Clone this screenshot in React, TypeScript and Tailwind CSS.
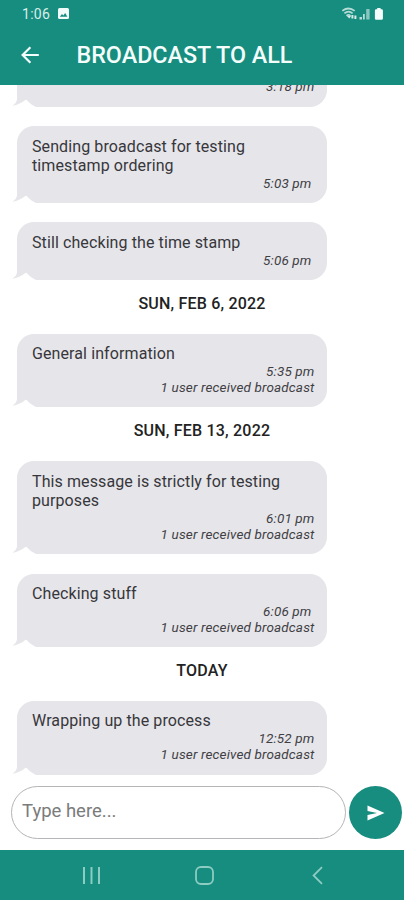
import clsx from "clsx";

type Message = {
  text?: string;
  time: string;
  received?: string;
  inset?: boolean;
};

type Group = {
  date?: string;
  messages: Message[];
};

const received = "1 user received broadcast";

const groups: Group[] = [
  {
    messages: [
      { time: "3:18 pm" },
      {
        text: "Sending broadcast for testing timestamp ordering",
        time: "5:03 pm",
        inset: true,
      },
      { text: "Still checking the time stamp", time: "5:06 pm", inset: true },
    ],
  },
  {
    date: "SUN, FEB 6, 2022",
    messages: [{ text: "General information", time: "5:35 pm", received }],
  },
  {
    date: "SUN, FEB 13, 2022",
    messages: [
      {
        text: "This message is strictly for testing purposes",
        time: "6:01 pm",
        received,
      },
      { text: "Checking stuff", time: "6:06 pm", received, inset: true },
    ],
  },
  {
    date: "TODAY",
    messages: [
      { text: "Wrapping up the process", time: "12:52 pm", received },
    ],
  },
];

function StatusBar() {
  return (
    <div className="flex h-[27px] items-center pl-[22px] pr-[20px] text-[#d8efeb]">
      <span className="text-[14px] leading-none tracking-[0.3px]">1:06</span>
      <svg className="ml-[8px]" width="11" height="11" viewBox="0 0 11 11">
        <rect width="11" height="11" rx="1.5" fill="#f1fbf9" />
        <path d="M1.8 8.7 L4 5.9 L5.3 7.4 L7.2 5 L9.4 8.7 Z" fill="#178d7f" />
      </svg>
      <svg className="ml-auto" width="42" height="14" viewBox="0 0 42 14">
        <g fill="none" stroke="#b5dcd6" strokeWidth="1.8">
          <path d="M0.3 3.9 Q6.5 -1 12.7 3.9" />
          <path d="M2.4 6.4 Q6.5 2.8 10.6 6.4" />
          <path d="M4.5 8.8 Q6.5 7 8.5 8.8" />
        </g>
        <path d="M5 9 L7.3 11.5 L9 9 Z" fill="#d5ece8" />
        <path d="M10.4 8 v3.5 M13.4 8.5 v3.5" stroke="#d5ece8" strokeWidth="2" />
        <path d="M17.5 10 h2.5 v2.5 h-2.5 z M21 7 h1.8 v5.5 h-1.8 z" fill="#b5dcd6" />
        <path d="M24.2 2 h3.4 v10.5 h-3.4 z" fill="#8ac6bd" />
        <path
          d="M35.2 1 h3.4 v1.2 h1 q1.3 0 1.3 1.3 v8 q0 1.3 -1.3 1.3 h-5.4 q-1.3 0 -1.3 -1.3 v-8 q0 -1.3 1.3 -1.3 h1 z"
          fill="#f4fdfb"
        />
      </svg>
    </div>
  );
}

function Header() {
  return (
    <header className="z-10 h-[85px] shrink-0 bg-[#178d7f]">
      <StatusBar />
      <div className="flex h-[56px] items-center pl-[21px]">
        <button aria-label="Back" className="h-[18px] w-[18px]">
          <svg width="18" height="18" viewBox="0 0 18 18" fill="none">
            <path
              d="M17.8 9 H2 M9.4 1.2 L1.6 9 L9.4 16.8"
              stroke="#f4fdfb"
              strokeWidth="2.2"
            />
          </svg>
        </button>
        <h1 className="ml-[37.5px] pt-[2px] text-[23.3px] font-medium leading-none text-[#f4fdfb]">
          BROADCAST TO ALL
        </h1>
      </div>
    </header>
  );
}

function Bubble({ text, time, received, inset }: Message) {
  return (
    <div className="relative w-[310px] rounded-[17px] bg-[#e6e5ea] pb-[12.2px] pl-[15px] pr-[12.5px] pt-[10.3px]">
      {text && (
        <p className="w-[270px] text-[16px] leading-[19px] tracking-[0.1px] text-[#37373b]">
          {text}
        </p>
      )}
      <div className="text-right text-[13.5px] italic leading-[16px] tracking-[0.15px] text-[#3f3f44]">
        <p className={clsx(inset && "pr-[3px]")}>{time}</p>
        {received && <p>{received}</p>}
      </div>
      {/* cola del globo */}
      <svg
        className="absolute -left-[5px] bottom-0"
        width="24"
        height="20"
        viewBox="0 0 24 20"
      >
        <path d="M0 20 L5 14 L14 12.5 Q18 17.2 24 20 Z" fill="#fff" />
        <path
          d="M5 2 V13 Q4 17 0.5 18.8 Q8 17.5 14 12.5 L20 2 Z"
          fill="#e6e5ea"
        />
      </svg>
    </div>
  );
}

function MessageList() {
  return (
    <main className="flex min-h-0 flex-1 flex-col justify-end overflow-hidden pb-[11.5px] pl-[17px]">
      {groups.map((group, i) => (
        <section key={i} className="shrink-0">
          {group.date && (
            <h2 className="-ml-[17px] pb-[21px] pt-[14px] text-center text-[16px] font-medium leading-[19px] tracking-[0.2px] text-[#222]">
              {group.date}
            </h2>
          )}
          <div className="flex flex-col gap-[19.7px]">
            {group.messages.map((m) => (
              <Bubble key={m.time} {...m} />
            ))}
          </div>
        </section>
      ))}
    </main>
  );
}

function Composer() {
  return (
    <div className="flex h-[64px] shrink-0 items-start gap-[3px] pl-[11px]">
      <input
        placeholder="Type here..."
        className="h-[53px] w-[335px] rounded-full border border-[#b5b4b8] bg-white px-[10px] pb-[3px] text-[18.5px] outline-none placeholder:text-[#7b7b7b]"
      />
      <button
        aria-label="Send"
        className="flex h-[53px] w-[53px] items-center justify-center rounded-full bg-[#178d7f]"
      >
        <svg width="18" height="16" viewBox="0 0 18 16">
          <path d="M0.5 0.5 L17.5 8 L0.5 15.5 V9.9 L10 8 L0.5 6.1 Z" fill="#fff" />
        </svg>
      </button>
    </div>
  );
}

function NavBar() {
  return (
    <nav className="flex h-[50px] shrink-0 items-center bg-[#178d7f] pl-[82px]">
      <svg width="19" height="19" viewBox="0 0 19 19" stroke="#8cccc2" strokeWidth="2">
        <path d="M2 1 V18 M9.5 1 V18 M17 1 V18" />
      </svg>
      <svg
        className="ml-[94px]"
        width="19"
        height="19"
        viewBox="0 0 19 19"
        fill="none"
      >
        <rect x="1" y="1" width="17" height="17" rx="5" stroke="#8cccc2" strokeWidth="1.8" />
      </svg>
      <svg
        className="ml-[98px]"
        width="11"
        height="19"
        viewBox="0 0 11 19"
        fill="none"
      >
        <path d="M10 1.2 L1.6 9.5 L10 17.8" stroke="#8cccc2" strokeWidth="1.8" />
      </svg>
    </nav>
  );
}

export default function App() {
  return (
    <div className="flex h-screen w-full flex-col overflow-hidden bg-white font-[Roboto,sans-serif]">
      <Header />
      <MessageList />
      <Composer />
      <NavBar />
    </div>
  );
}
